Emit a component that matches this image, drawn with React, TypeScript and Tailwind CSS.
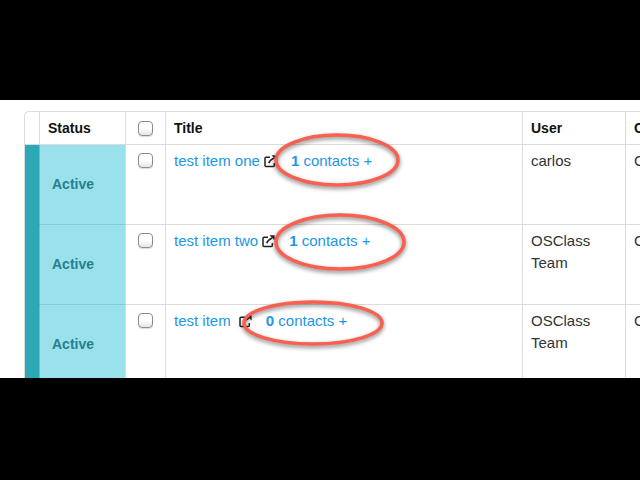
import React from 'react';

const items = [
  {
    id: 1,
    title: 'test item one',
    contacts: 1,
    user: 'carlos',
    height: 'h-[80px]',
    ring: { rx: 61, ry: 25, position: 'left-[106px] -top-[14px]' },
  },
  {
    id: 2,
    title: 'test item two',
    contacts: 1,
    user: 'OSClass Team',
    height: 'h-[80px]',
    ring: { rx: 64, ry: 27, position: 'left-[106px] -top-[14px]' },
  },
  {
    id: 3,
    title: 'test item ',
    contacts: 0,
    user: 'OSClass Team',
    height: 'h-[73px]',
    ring: { rx: 69, ry: 21, position: 'left-[74px] -top-[7px]' },
  },
];

function Checkbox({ label }: { label: string }) {
  return (
    <input
      type="checkbox"
      aria-label={label}
      className="block mx-auto w-[15px] h-[15px] appearance-none rounded-[4px] border border-[#8c8c8c] bg-linear-to-b from-white from-45% to-[#e6e6e6] shadow-[0_1px_1px_#dddddd] checked:bg-[#8bb8e8]"
    />
  );
}

function ExternalIcon() {
  return (
    <svg viewBox="0 0 13 13" className="w-[13px] h-[13px] shrink-0" fill="none" stroke="#222" aria-hidden="true">
      <path d="M6 2.2H2Q1 2.2 1 3.2V10.5Q1 11.5 2 11.5H9.3Q10.3 11.5 10.3 10.5V8" strokeWidth="1.5" />
      <path d="M4.8 8.2Q5.8 5 10 3" strokeWidth="1.6" />
      <path d="M7.5 .3H12.6V5.5Z" fill="#222" stroke="none" />
    </svg>
  );
}

function Ring({ rx, ry, position }: { rx: number; ry: number; position: string }) {
  const width = rx * 2 + 8;
  const height = ry * 2 + 8;

  return (
    <svg
      width={width}
      height={height}
      className={`absolute pointer-events-none overflow-visible drop-shadow-[0_2px_2px_rgba(0,0,0,0.5)] ${position}`}
      aria-hidden="true"
    >
      <ellipse cx={width / 2} cy={height / 2} rx={rx} ry={ry} fill="none" stroke="#f9604f" strokeWidth="3.5" />
    </svg>
  );
}

export default function App() {
  return (
    <div className="min-h-screen bg-black pt-[100px] font-['Liberation_Sans',Arial,sans-serif]">
      <main className="bg-white pt-[11px] pl-6 overflow-hidden">
        <div className="border-t border-l border-[#dcdcdc] rounded-tl-[5px]">
          <table className="w-full table-fixed border-separate border-spacing-0 text-left text-[15px] leading-[22px] text-[#333]">
            <colgroup>
              <col className="w-[15px]" />
              <col className="w-[86px]" />
              <col className="w-[40px]" />
              <col />
              <col className="w-[103px]" />
              <col className="w-[14px]" />
            </colgroup>
            <thead>
              <tr className="h-[33px] text-sm text-[#111] *:border-b *:border-r *:border-[#dcdcdc]">
                <th className="p-0" />
                <th className="px-2 py-0">Status</th>
                <th className="p-0">
                  <Checkbox label="Select all" />
                </th>
                <th className="px-2 py-0">Title</th>
                <th className="px-2 py-0">User</th>
                <th className="pl-2 pr-0 py-0 overflow-hidden border-r-0!">C</th>
              </tr>
            </thead>
            <tbody>
              {items.map((item) => (
                <tr key={item.id} className={`${item.height} align-top *:border-r *:border-[#dcdcdc] not-last:*:border-b`}>
                  <td className="p-0 bg-[#2ca8b6] border-[#2ca8b6]! border-r-[#62c1cc]!" />
                  <td className="px-3 pt-7 pb-0 bg-[#9be1eb] border-b-[#84cad3]! text-sm leading-[22px] font-bold text-[#27808a]">
                    Active
                  </td>
                  <td className="px-0 pt-2 pb-0">
                    <Checkbox label={`Select ${item.title.trim()}`} />
                  </td>
                  <td className="relative px-2 pt-[5px] pb-0">
                    <div className="flex items-center whitespace-pre text-[#2196e6]">
                      <a href="#item">{item.title}</a>
                      <span className="ml-1 mr-[14px]">
                        <ExternalIcon />
                      </span>
                      <a href="#contacts">
                        <b>{item.contacts}</b> contacts +
                      </a>
                    </div>
                    <Ring {...item.ring} />
                  </td>
                  <td className="px-2 pt-[5px] pb-0">{item.user}</td>
                  <td className="pl-2 pr-0 pt-[5px] pb-0 overflow-hidden border-r-0!">C</td>
                </tr>
              ))}
            </tbody>
          </table>
        </div>
      </main>
    </div>
  );
}
